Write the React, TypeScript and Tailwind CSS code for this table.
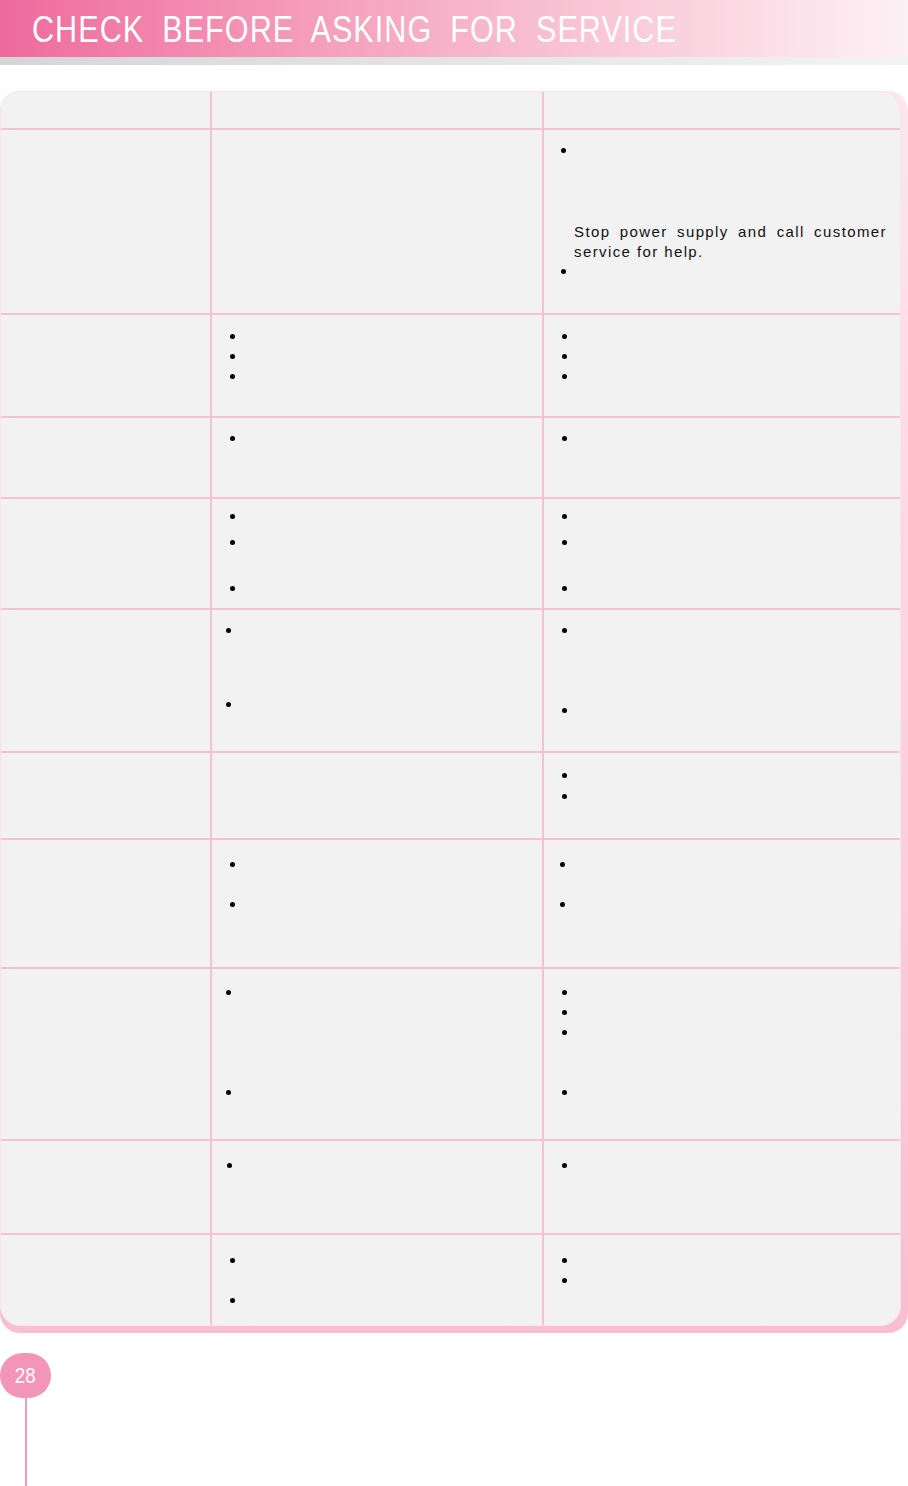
import React from 'react'

function Dot({ className = '' }: { className?: string }) {
  return <div className={`h-[5px] w-[5px] shrink-0 rounded-full bg-black ${className}`} />
}

function Row({
  height,
  col2,
  col3,
  last = false,
}: {
  height: string
  col2?: React.ReactNode
  col3?: React.ReactNode
  last?: boolean
}) {
  return (
    <div
      className={`grid grid-cols-[211px_332px_1fr] ${height} ${last ? '' : 'border-b-2 border-[#f8c0d4]'}`}
    >
      <div className="border-r-2 border-[#f8c0d4]" />
      <div className="flex flex-col border-r-2 border-[#f8c0d4]">{col2}</div>
      <div className="flex flex-col">{col3}</div>
    </div>
  )
}

export default function App() {
  return (
    <div className="min-h-[1486px] w-[908px] bg-white font-['Liberation_Sans',sans-serif]">
      {/* title bar */}
      <div className="flex h-[57px] items-center bg-linear-to-r from-[#ee6a9c] via-[#f6b3c9] to-[#fdf1f5] pl-[32px] pt-[3px]">
        <h1 className="origin-left scale-x-[0.85] whitespace-nowrap text-[36px] font-normal leading-none tracking-[1.2px] text-white [word-spacing:10px]">
          CHECK BEFORE ASKING FOR SERVICE
        </h1>
      </div>
      <div className="h-[8px] bg-linear-to-r from-[#d6d6d6] to-[#f3f3f3]" />

      {/* table card with pink offset shadow */}
      <div className="mt-[26px] w-[908px] rounded-[20px] bg-linear-to-b from-[#fde6ee] to-[#f8bed2] pb-[7px] pr-[7px]">
        <div className="w-[901px] overflow-hidden rounded-[20px] border border-[#fbe2eb] bg-[#f2f2f2]">
          <Row height="h-[38px]" />

          <Row
            height="h-[185px]"
            col3={
              <>
                <Dot className="ml-[17px] mt-[18px]" />
                <p className="ml-[30px] mt-[69px] w-[313px] text-justify text-[15px] leading-[20px] tracking-[1.4px] text-[#111]">
                  Stop power supply and call customer service for help.
                </p>
                <Dot className="ml-[17px] mt-[7px]" />
              </>
            }
          />

          <Row
            height="h-[103px]"
            col2={
              <>
                <Dot className="ml-[18px] mt-[19px]" />
                <Dot className="ml-[18px] mt-[15px]" />
                <Dot className="ml-[18px] mt-[15px]" />
              </>
            }
            col3={
              <>
                <Dot className="ml-[18px] mt-[19px]" />
                <Dot className="ml-[18px] mt-[15px]" />
                <Dot className="ml-[18px] mt-[15px]" />
              </>
            }
          />

          <Row
            height="h-[81px]"
            col2={<Dot className="ml-[18px] mt-[18px]" />}
            col3={<Dot className="ml-[18px] mt-[18px]" />}
          />

          <Row
            height="h-[111px]"
            col2={
              <>
                <Dot className="ml-[18px] mt-[15px]" />
                <Dot className="ml-[18px] mt-[21px]" />
                <Dot className="ml-[18px] mt-[41px]" />
              </>
            }
            col3={
              <>
                <Dot className="ml-[18px] mt-[15px]" />
                <Dot className="ml-[18px] mt-[21px]" />
                <Dot className="ml-[18px] mt-[41px]" />
              </>
            }
          />

          <Row
            height="h-[143px]"
            col2={
              <>
                <Dot className="ml-[14px] mt-[18px]" />
                <Dot className="ml-[14px] mt-[69px]" />
              </>
            }
            col3={
              <>
                <Dot className="ml-[18px] mt-[18px]" />
                <Dot className="ml-[18px] mt-[75px]" />
              </>
            }
          />

          <Row
            height="h-[87px]"
            col3={
              <>
                <Dot className="ml-[18px] mt-[20px]" />
                <Dot className="ml-[18px] mt-[16px]" />
              </>
            }
          />

          <Row
            height="h-[129px]"
            col2={
              <>
                <Dot className="ml-[18px] mt-[22px]" />
                <Dot className="ml-[18px] mt-[35px]" />
              </>
            }
            col3={
              <>
                <Dot className="ml-[16px] mt-[22px]" />
                <Dot className="ml-[16px] mt-[35px]" />
              </>
            }
          />

          <Row
            height="h-[172px]"
            col2={
              <>
                <Dot className="ml-[14px] mt-[21px]" />
                <Dot className="ml-[14px] mt-[95px]" />
              </>
            }
            col3={
              <>
                <Dot className="ml-[18px] mt-[21px]" />
                <Dot className="ml-[18px] mt-[15px]" />
                <Dot className="ml-[18px] mt-[15px]" />
                <Dot className="ml-[18px] mt-[55px]" />
              </>
            }
          />

          <Row
            height="h-[94px]"
            col2={<Dot className="ml-[15px] mt-[22px]" />}
            col3={<Dot className="ml-[18px] mt-[22px]" />}
          />

          <Row
            height="h-[90px]"
            last
            col2={
              <>
                <Dot className="ml-[18px] mt-[23px]" />
                <Dot className="ml-[18px] mt-[35px]" />
              </>
            }
            col3={
              <>
                <Dot className="ml-[18px] mt-[23px]" />
                <Dot className="ml-[18px] mt-[15px]" />
              </>
            }
          />
        </div>
      </div>

      {/* page number */}
      <div className="mt-[20px] flex w-[51px] flex-col items-center">
        <div className="flex h-[45px] w-[51px] items-center justify-center rounded-full bg-[#f395b6]">
          <span className="scale-x-[0.85] text-[22px] leading-none text-white">28</span>
        </div>
        <div className="h-[88px] w-[2px] bg-[#f39ab9]" />
      </div>
    </div>
  )
}
